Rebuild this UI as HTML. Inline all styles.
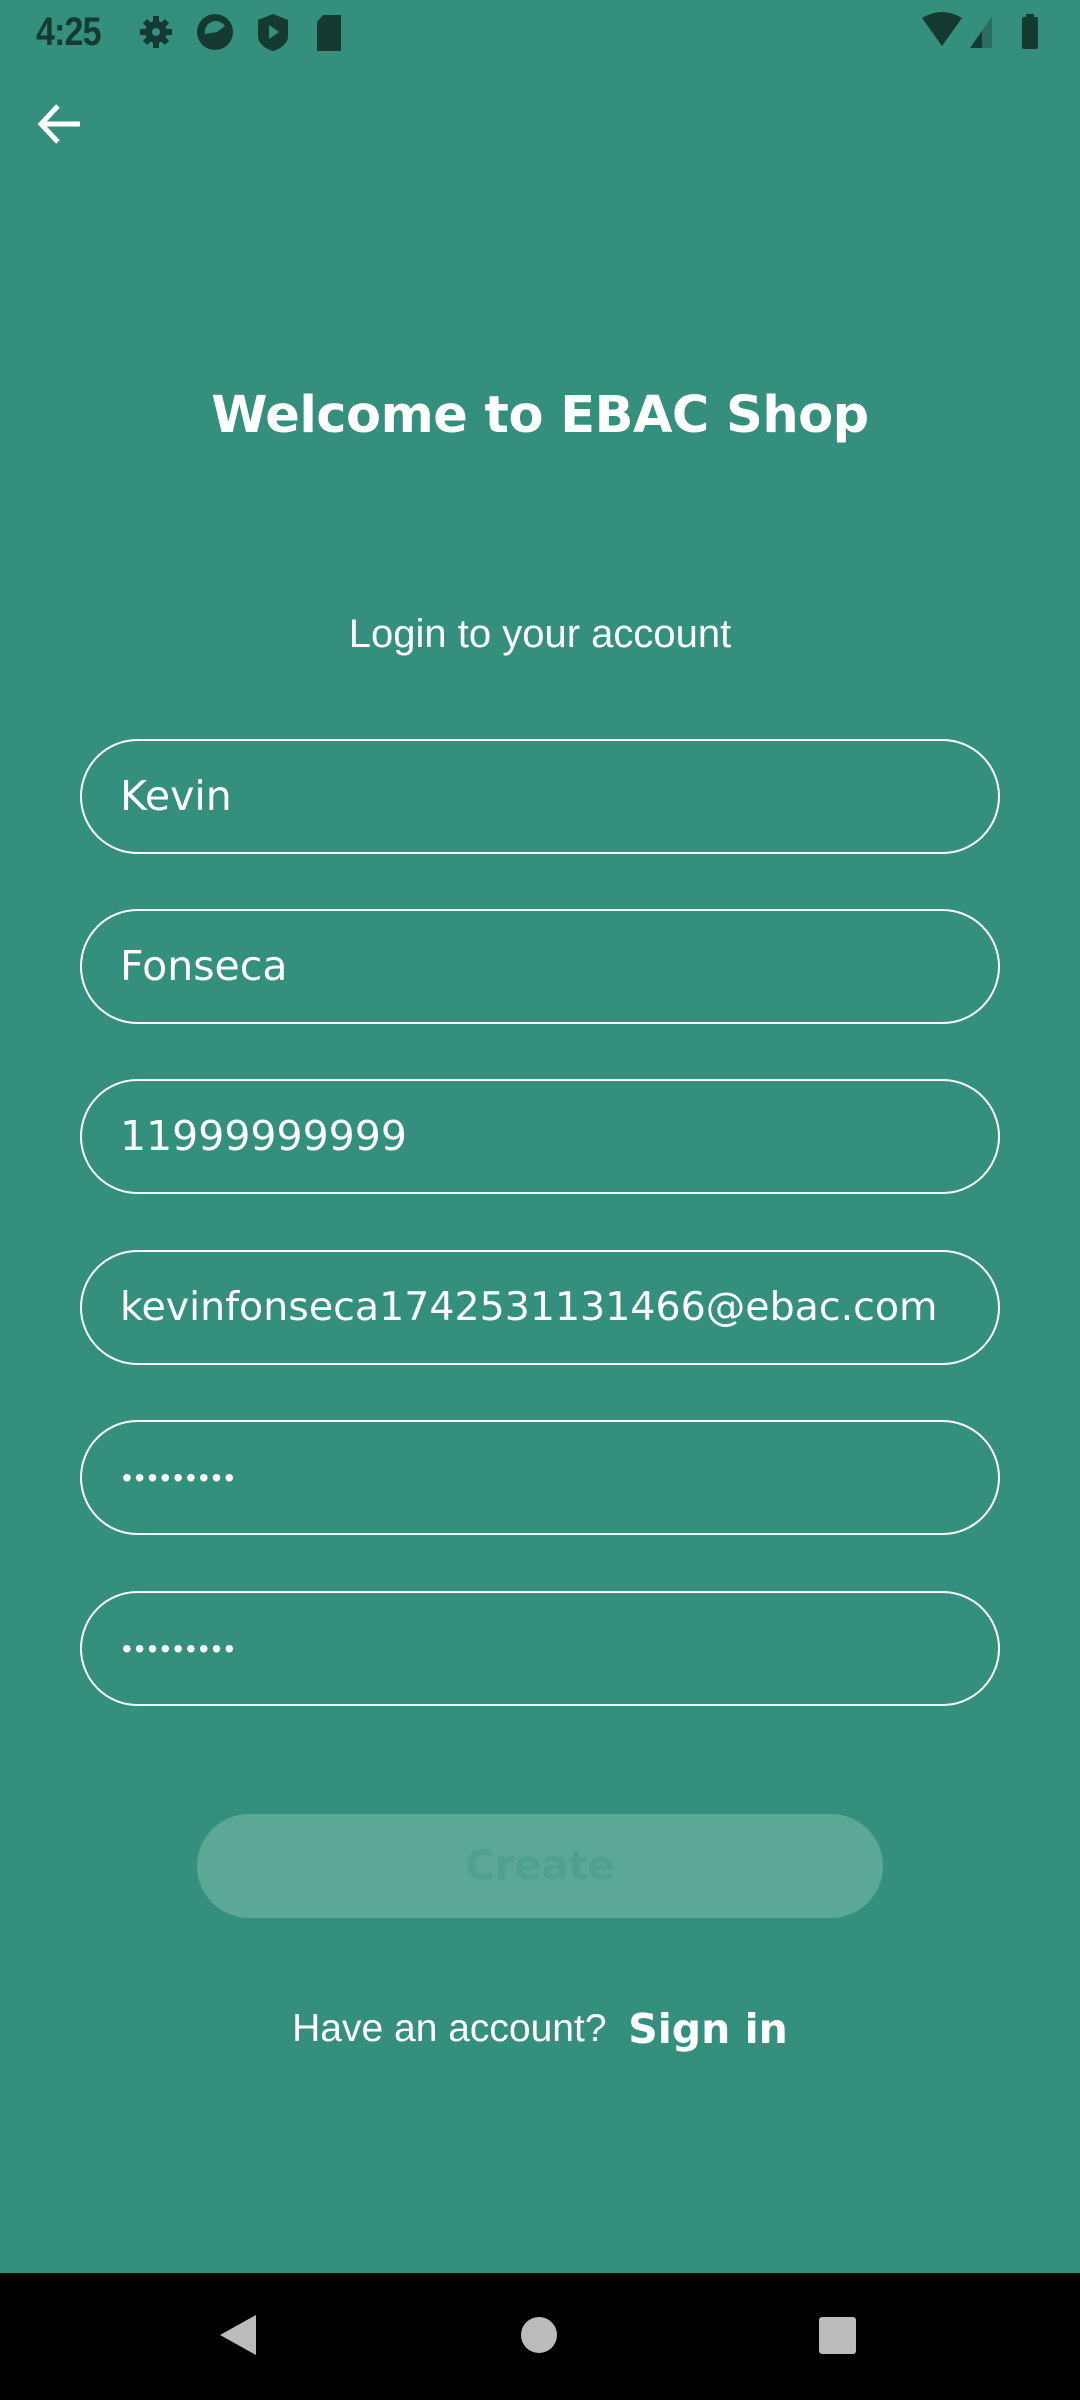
<!DOCTYPE html>
<html><head><meta charset="utf-8"><style>
*{margin:0;padding:0;box-sizing:border-box}
body{width:1080px;height:2400px;background:#34907c;position:relative;overflow:hidden;font-family:"Liberation Sans",sans-serif;color:#fff}
.a{position:absolute}
.f{position:absolute;left:80px;width:920px;height:115px;border:2px solid #fff;border-radius:58px;font-size:41px;line-height:111px;padding-left:38px;font-family:"DejaVu Sans","Liberation Sans",sans-serif}
.d{font-family:"Liberation Sans",sans-serif;font-size:28px;letter-spacing:3px;padding-left:40px}
</style></head><body>
<div class="a" style="left:36px;top:10px;font-size:40px;color:#153a31;letter-spacing:-1px;font-weight:bold;transform:scaleX(0.85);transform-origin:left">4:25</div>
<svg class="a" style="left:135px;top:12px" width="220" height="40" viewBox="0 0 220 40">
<g fill="#153a31">
<circle cx="21" cy="20" r="11"/><g stroke="#153a31" stroke-width="6"><line x1="21" y1="4" x2="21" y2="36"/><line x1="5" y1="20" x2="37" y2="20"/><line x1="10" y1="9" x2="32" y2="31"/><line x1="32" y1="9" x2="10" y2="31"/></g><circle cx="21" cy="20" r="4" fill="#34907c"/>
<circle cx="80" cy="20" r="18"/><path d="M70 22 A11 11 0 0 1 90 14 L82 20Z" fill="#34907c"/>
<path d="M138 2 L153 8 V24 C153 32 145 37 138 39 C131 37 123 32 123 24 V8Z"/><path d="M134 13 L144 20 L134 27Z" fill="#34907c"/>
<path d="M188 3 H206 V39 H182 V10Z"/>
</g></svg>
<svg class="a" style="left:920px;top:12px" width="130" height="40" viewBox="0 0 130 40">
<path d="M2 6 Q22 -6 42 6 L22 34Z" fill="#153a31"/>
<path d="M50 36 L72 4 V36Z" fill="#2a6e5f"/><path d="M50 36 L62 19 V36Z" fill="#153a31"/>
<rect x="106" y="2" width="8" height="4" fill="#153a31"/><rect x="102" y="5" width="16" height="32" rx="2" fill="#153a31"/>
</svg>
<svg class="a" style="left:36px;top:100px" width="48" height="48" viewBox="0 0 48 48"><path d="M44 24 H6 M22 6 L5 24 L22 42" stroke="#fff" stroke-width="5" fill="none"/></svg>
<div class="a" style="left:0;width:1080px;top:386px;text-align:center;font-size:51px;font-weight:bold;font-family:'DejaVu Sans','Liberation Sans',sans-serif;letter-spacing:-0.5px">Welcome to EBAC Shop</div>
<div class="a" style="left:0;width:1080px;top:612px;text-align:center;font-size:40px">Login to your account</div>
<div class="f" style="top:739px">Kevin</div>
<div class="f" style="top:909px">Fonseca</div>
<div class="f" style="top:1079px">11999999999</div>
<div class="f" style="top:1250px;font-size:39.5px;letter-spacing:0px">kevinfonseca1742531131466@ebac.com</div>
<div class="f d" style="top:1420px">•••••••••</div>
<div class="f d" style="top:1591px">•••••••••</div>
<div class="a" style="left:197px;top:1814px;width:686px;height:104px;border-radius:52px;background:#5ba897;text-align:center;line-height:104px;font-size:40px;font-weight:bold;color:#4fa18e;font-family:'DejaVu Sans',sans-serif">Create</div>
<div class="a" style="left:0;width:1080px;top:2005px;text-align:center;font-size:39px;white-space:nowrap"><span style="vertical-align:middle">Have an account?</span>&nbsp; <span style="font-size:41px;font-weight:bold;font-family:'DejaVu Sans',sans-serif;vertical-align:middle">Sign in</span></div>
<div class="a" style="left:0;top:2273px;width:1080px;height:127px;background:#000"></div>
<svg class="a" style="left:0;top:2273px" width="1080" height="127"><path d="M256 42 V82 L220 62Z" fill="#bbb"/><circle cx="539" cy="62" r="18" fill="#bbb"/><rect x="819" y="44" width="37" height="37" rx="3" fill="#bbb"/></svg>
</body></html>
